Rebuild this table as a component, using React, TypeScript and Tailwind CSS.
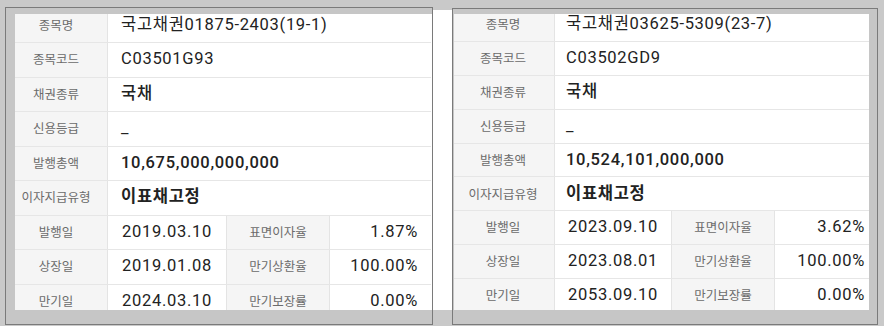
import React from 'react';

type Info = {
  name: string;
  code: string;
  kind: string;
  grade: string;
  amount: string;
  couponType: string;
  issued: string;
  listed: string;
  maturity: string;
  coupon: string;
  redemption: string;
  guarantee: string;
};

const LEFT: Info = {
  name: '국고채권01875-2403(19-1)',
  code: 'C03501G93',
  kind: '국채',
  grade: '_',
  amount: '10,675,000,000,000',
  couponType: '이표채고정',
  issued: '2019.03.10',
  listed: '2019.01.08',
  maturity: '2024.03.10',
  coupon: '1.87%',
  redemption: '100.00%',
  guarantee: '0.00%',
};

const RIGHT: Info = {
  name: '국고채권03625-5309(23-7)',
  code: 'C03502GD9',
  kind: '국채',
  grade: '_',
  amount: '10,524,101,000,000',
  couponType: '이표채고정',
  issued: '2023.09.10',
  listed: '2023.08.01',
  maturity: '2053.09.10',
  coupon: '3.62%',
  redemption: '100.00%',
  guarantee: '0.00%',
};

const KR = "font-['Noto_Sans_CJK_KR',sans-serif]";
const VAL = "font-['Roboto','Noto_Sans_CJK_KR',sans-serif] text-[16.5px] tracking-[0.7px] text-[#222]";

// ── 표 ───────────────────────────────────────────────────────────────────────

function Label({ children, w }: { children: React.ReactNode; w: string }) {
  return (
    <div className={`${w} flex shrink-0 items-center justify-center border-r border-[#e4e4e4] bg-[#f5f5f5] text-[12.5px] text-[#6b6b6b] ${KR}`}>
      {children}
    </div>
  );
}

function BondTable({ d, rowH, cols, valuePad }: { d: Info; rowH: string; cols: [string, string, string, string]; valuePad: string }) {
  const row = `flex ${rowH} border-b border-[#e6e6e6]`;
  const wide = (label: string, value: string, weight = 'font-normal') => (
    <div className={row}>
      <Label w={cols[0]}>{label}</Label>
      <div className={`flex flex-1 items-center bg-white ${valuePad} ${VAL} ${weight}`}>{value}</div>
    </div>
  );
  const split = (l1: string, v1: string, l2: string, v2: string) => (
    <div className={row}>
      <Label w={cols[0]}>{l1}</Label>
      <div className={`${cols[1]} flex shrink-0 items-center justify-center border-r border-[#e4e4e4] bg-white ${VAL}`}>{v1}</div>
      <Label w={cols[2]}>{l2}</Label>
      <div className={`${cols[3]} flex shrink-0 items-center justify-end bg-white pr-[13px] ${VAL}`}>{v2}</div>
    </div>
  );

  return (
    <div className="flex w-max flex-col bg-white">
      {wide('종목명', d.name)}
      {wide('종목코드', d.code)}
      {wide('채권종류', d.kind, 'font-medium')}
      {wide('신용등급', d.grade)}
      {wide('발행총액', d.amount, 'font-medium')}
      {wide('이자지급유형', d.couponType, 'font-bold')}
      {split('발행일', d.issued, '표면이자율', d.coupon)}
      {split('상장일', d.listed, '만기상환율', d.redemption)}
      {split('만기일', d.maturity, '만기보장률', d.guarantee)}
    </div>
  );
}

export default function App() {
  return (
    <div className="flex h-[326px] w-[884px] overflow-hidden bg-[#c9c9c9]">
      <div className="w-[5px] shrink-0" />

      {/* ── 왼쪽 ─────────────────────────────────────────────────────────── */}
      <div className="mt-[7px] h-[318px] w-[428px] shrink-0 border border-[#7a7a7a] bg-[#c6c6c6] pb-[14px] pl-[9px] pt-[6px]">
        <div className="h-[296px] overflow-hidden bg-white">
          <div className="-ml-[10px] -mt-[5.5px]">
            <BondTable
              d={LEFT}
              rowH="h-[34.5px]"
              cols={['w-[103px]', 'w-[119px]', 'w-[103px]', 'w-[101px]']}
              valuePad="pl-[13px]"
            />
          </div>
        </div>
      </div>

      <div className="mt-[10px] h-[300px] w-[19px] shrink-0 bg-white" />

      {/* ── 오른쪽 ───────────────────────────────────────────────────────── */}
      <div className="mt-[8px] h-[317px] w-[426px] shrink-0 border border-[#7a7a7a] bg-[#c6c6c6] pb-[14px] pl-px pr-[8px] pt-[5px]">
        <div className="h-[296px] overflow-hidden bg-white">
          <div className="-ml-[2px] -mt-[6px]">
            <BondTable
              d={RIGHT}
              rowH="h-[33.9px]"
              cols={['w-[103px]', 'w-[117px]', 'w-[103px]', 'w-[103px]']}
              valuePad="pl-[11px]"
            />
          </div>
        </div>
      </div>
    </div>
  );
}
